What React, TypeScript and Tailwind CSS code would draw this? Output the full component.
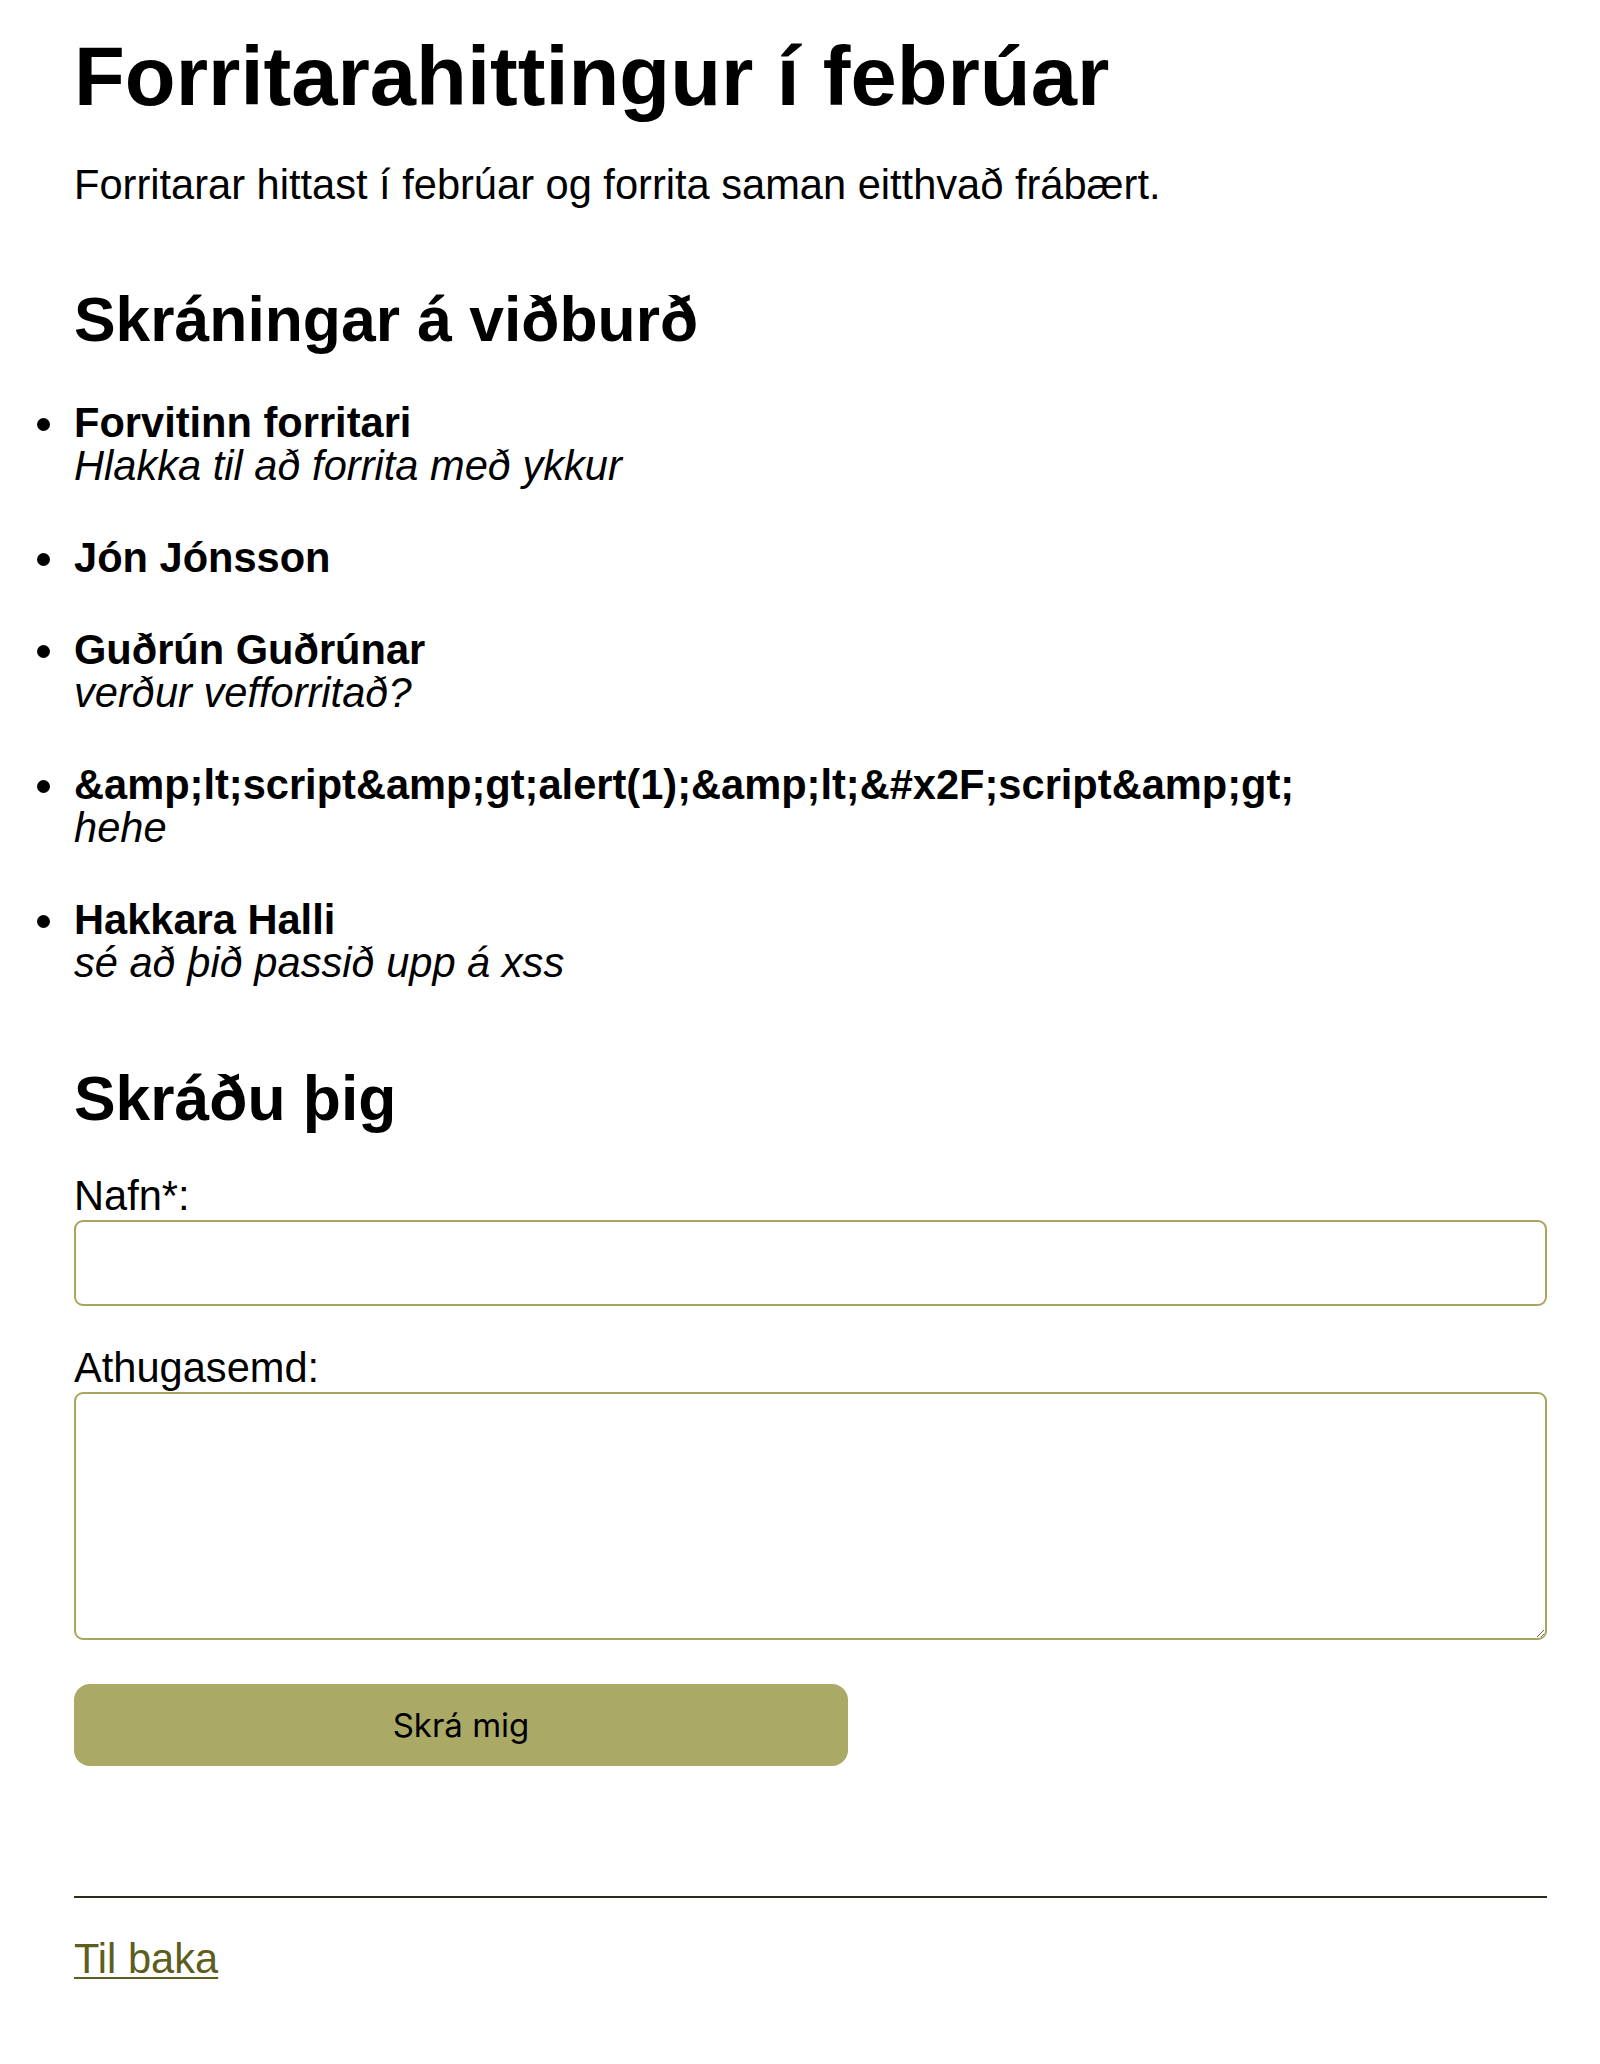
import React from "react";

const entries: { name: string; comment?: string }[] = [
  { name: "Forvitinn forritari", comment: "Hlakka til að forrita með ykkur" },
  { name: "Jón Jónsson" },
  { name: "Guðrún Guðrúnar", comment: "verður vefforritað?" },
  {
    name: "&amp;lt;script&amp;gt;alert(1);&amp;lt;&#x2F;script&amp;gt;",
    comment: "hehe",
  },
  { name: "Hakkara Halli", comment: "sé að þið passið upp á xss" },
];

export default function App() {
  return (
    <div
      className="min-h-[2064px] bg-white text-black pt-[34px] pl-[74px] pr-[53px] text-[41.6px] leading-[42px]"
      style={{ fontFamily: '"Liberation Sans", Arial, Helvetica, sans-serif' }}
    >
      <h1 className="text-[83.2px] leading-[86px] font-bold">
        Forritarahittingur í febrúar
      </h1>
      <p className="mt-[44px]">
        Forritarar hittast í febrúar og forrita saman eitthvað frábært.
      </p>

      <h2 className="mt-[82px] text-[62.4px] leading-[64px] font-bold">
        Skráningar á viðburð
      </h2>
      <ul className="mt-[49px] flex flex-col gap-[49px] leading-[43px]">
        {entries.map((e, i) => (
          <li key={i} className="flex -ml-[37px]">
            <span className="mt-[17px] w-[13px] h-[13px] shrink-0 rounded-full bg-black" />
            <div className="ml-[24px] flex flex-col">
              <span className="font-bold">{e.name}</span>
              {e.comment && <span className="italic">{e.comment}</span>}
            </div>
          </li>
        ))}
      </ul>

      <h2 className="mt-[83px] text-[62.4px] leading-[64px] font-bold">
        Skráðu þig
      </h2>
      <form className="flex flex-col" onSubmit={(ev) => ev.preventDefault()}>
        <label htmlFor="name" className="mt-[44px]">
          Nafn*:
        </label>
        <input
          id="name"
          type="text"
          className="mt-[3px] h-[86px] w-full rounded-[9px] border-2 border-[#a7a65c] bg-white px-3 outline-none"
        />
        <label htmlFor="comment" className="mt-[41px]">
          Athugasemd:
        </label>
        <textarea
          id="comment"
          className="mt-[3px] h-[248px] w-full rounded-[9px] border-2 border-[#a7a65c] bg-white px-3 outline-none"
        />
        <button
          type="submit"
          className="mt-[44px] h-[82px] w-[774px] rounded-[16px] bg-[#aaa966] text-[33px] leading-[40px] text-black"
          style={{ fontFamily: 'Inter, "Noto Sans", sans-serif' }}
        >
          Skrá mig
        </button>
      </form>

      <hr className="mt-[130px] border-0 border-t-2 border-[#2c2e1c]" />
      <div className="mt-[40px]">
        <a href="#" className="text-[#5d5d20] underline decoration-2 underline-offset-[4px]">
          Til baka
        </a>
      </div>
    </div>
  );
}
